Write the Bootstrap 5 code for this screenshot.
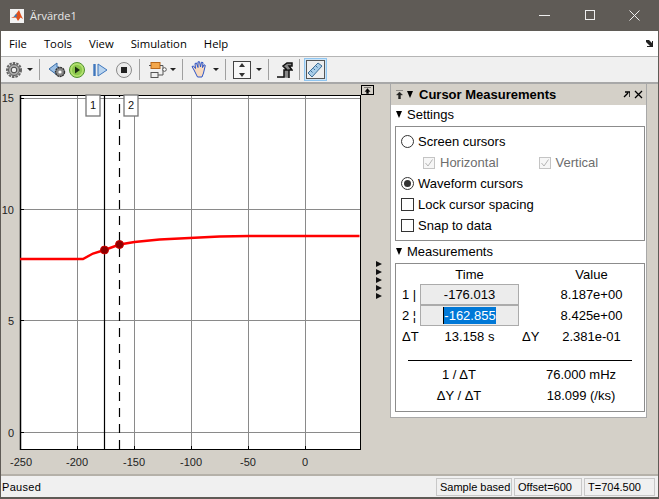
<!DOCTYPE html>
<html lang="sv">
<head>
<meta charset="UTF-8">
<title>Ärvärde1</title>
<link rel="stylesheet" href="https://cdn.jsdelivr.net/npm/bootstrap@5.3.2/dist/css/bootstrap.min.css">
<style>
html, body { width: 659px; height: 499px; overflow: hidden; background: #d4d0c8; }
body { font-family: "Liberation Sans", Arial, sans-serif; font-size: 13px; color: #000; line-height: 1; }
.win { width: 659px; height: 499px; border: 1px solid #5f5b56; border-top: 0; border-bottom-width: 2px; }
.titlebar { height: 31px; background: #5f5b56; font-family: "Open Sans", sans-serif; font-size: 11px; flex: none; }
.titlebar svg { display: block; }
.title-txt { margin-left: 5px; color: #e8e8e8; }
.winbtns { width: 101px; margin-right: 18px; }
.menubar { height: 26px; flex: none; background: #fff; border-bottom: 1px solid #b5b5b5; font-family: "Open Sans", sans-serif; font-size: 11.3px; padding: 0 5px 0 8px; gap: 17px; }
.toolbar { height: 27px; flex: none; background: #f0f0f0; border-bottom: 2px solid #a8a8a8; padding-left: 4px; }
.toolbar svg { display: block; flex: none; }
.tsep { width: 1px; height: 21px; background: #a0a0a0; margin-left: 6px; flex: none; }
.caret-ico { width: 6px; height: 0; border: 3px solid transparent; border-top: 3px solid #222; border-bottom: 0; flex: none; }
.tact { background: #cce4f7; border: 1px solid #8fc5f0; width: 23px; height: 23px; flex: none; margin-left: 4px; }
.g1 { margin-left: 1px; } .g2 { margin-left: 2px; } .g4 { margin-left: 4px; } .g5 { margin-left: 5px; }
.g6 { margin-left: 6px; } .g7 { margin-left: 7px; } .g8 { margin-left: 8px; }
.mainarea { height: 390px; flex: none; background: #d4d0c8; }
.plotwrap { width: 374px; flex: none; }
.plotwrap svg { display: block; }
.sidegap { width: 15px; flex: none; padding-top: 177px; }
.sidegap svg { display: block; }
.meas { width: 257px; height: 334px; flex: none; background: #fff; border-right: 1px solid #a8a8a8; border-bottom: 1px solid #a8a8a8; border-left: 1px solid #a8a8a8; }
.meas-head { height: 21px; background: #d4d0c8; padding: 0 3px 0 5px; font-weight: 700; font-size: 13px; }
.tri { display: inline-block; width: 0; height: 0; border: 3.5px solid transparent; border-top: 7px solid #000; border-bottom: 0; flex: none; }
.sect-head { height: 21px; padding-left: 5px; padding-bottom: 2px; gap: 5px; }
.sect-head.second { height: 22px; }
.sect-box { margin: 0 1px 0 4px; border: 1px solid #8c8c8c; }
.setbox { height: 115px; padding: 4px 0 0 5px; }
.optrow { height: 21px; gap: 4px; }
.optrow.subopt { padding-left: 22px; color: #6d6d6d; gap: 5px; }
.radio-ico { width: 13px; height: 13px; border: 1px solid #333; border-radius: 50%; background: #fff; flex: none; position: relative; }
.radio-ico.on::after { content: ""; position: absolute; left: 2px; top: 2px; width: 7px; height: 7px; border-radius: 50%; background: #333; }
.check-ico { width: 13px; height: 13px; border: 1px solid #333; background: #fff; flex: none; }
.check-ico svg { display: block; }
.check-ico.off { width: 12px; height: 12px; border-color: #c4c4c4; background: #f6f6f6; }
.subgap { margin-right: 35px; }
.measbox { height: 149px; }
.mrow { height: 21px; }
.mrow.shortrow { height: 20px; }
.c1 { width: 24px; padding-left: 6px; flex: none; }
.c2 { width: 99px; flex: none; text-align: center; }
.c3 { width: 34px; flex: none; padding-left: 3px; }
.c4 { flex: 1; text-align: center; padding-right: 14px; }
.timecell { height: 21px; background: #ececec; border: 1px solid #ababab; line-height: 19px; }
.sel-num { background: #0078d7; color: #fff; display: inline-block; line-height: 17px; border-left: 1px solid #000; }
.mrule { height: 1px; background: #000; margin: 13px 12px 3px 12px; }
.c5 { width: 126px; flex: none; text-align: center; }
.c6 { flex: 1; text-align: center; padding-right: 4px; }
.statusbar { height: 23px; flex: none; background: #f0f0f0; border-top: 2px solid #b5b1a9; font-size: 11px; padding: 2px 3px 0 1px; }
.sbox { height: 18px; background: #f0f0f0; border: 1px solid #c8c8c8; padding-left: 3px; line-height: 16px; margin-left: 2px; white-space: nowrap; }
.sb-a { width: 76px; } .sb-b { width: 68px; } .sb-c { width: 71px; }
.status-msg { line-height: 18px; letter-spacing: .3px; }
</style>
</head>
<body>
<div class="win d-flex flex-column">
  <!-- title bar -->
  <div class="titlebar d-flex align-items-center">
    <svg class="g8" width="16" height="16" viewBox="0 0 16 16"><rect x="1" y="1" width="14" height="14" fill="#f2f2f2"/><path d="M2 10l3-1.500L7 6l3-4 2 5 2 4-2.500-1.500L9 13 7 9.500z" fill="#e0521f"/><path d="M2 10l3-1.500L7 6l1 1-1 2.500L5 8.500z" fill="#2f7fbf"/></svg>
    <span class="title-txt flex-grow-1">Ärvärde1</span>
    <div class="winbtns d-flex justify-content-between align-items-center">
      <svg width="11" height="11" viewBox="0 0 11 11"><path d="M0 5.500h11" stroke="#eee"/></svg>
      <svg width="10" height="11" viewBox="0 0 10 11"><rect x=".5" y=".5" width="9" height="9" fill="none" stroke="#eee"/></svg>
      <svg width="11" height="11" viewBox="0 0 11 11"><path d="M.5.500l10 10M10.500.500l-10 10" stroke="#eee"/></svg>
    </div>
  </div>
  <!-- menu -->
  <div class="menubar d-flex align-items-center">
    <span>File</span><span>Tools</span><span>View</span><span>Simulation</span><span>Help</span>
    <svg class="ms-auto" width="7" height="7" viewBox="0 0 7 7"><path d="M0 0h3l3 3V1h1v6H1V6h3L0 2z" fill="#222"/></svg>
  </div>
  <!-- toolbar -->
  <div class="toolbar d-flex align-items-center">
    <svg width="18" height="18" viewBox="0 0 18 18"><circle cx="9" cy="9" r="7" fill="none" stroke="#666" stroke-width="2" stroke-dasharray="2.500 1"/><circle cx="9" cy="9" r="5.500" fill="#aaa" stroke="#555"/><circle cx="9" cy="9" r="2.800" fill="#eee" stroke="#444"/></svg>
    <span class="caret-ico g4"></span><span class="tsep"></span>
    <svg class="g8" width="19" height="18" viewBox="0 0 19 18"><path d="M1 8l8-6v4h2v7H9v1z" fill="#9cc0e6" stroke="#3a6ea8"/><circle cx="12" cy="11" r="4.500" fill="#888" stroke="#333" stroke-width="1.400" stroke-dasharray="2 .6"/><circle cx="12" cy="11" r="1.600" fill="#fff"/></svg>
    <svg class="g1" width="18" height="18" viewBox="0 0 18 18"><circle cx="9" cy="9" r="7.500" fill="#b2e06e" stroke="#4f9030"/><circle cx="9" cy="9" r="5.200" fill="#8cc84c"/><path d="M7 5.500l5 3.500-5 3.500z" fill="#1b2d12"/></svg>
    <svg class="g7" width="16" height="16" viewBox="0 0 16 16"><path d="M1.500 2v12" stroke="#3f77bd" stroke-width="2.400"/><path d="M5 2l9 6-9 6z" fill="#b9d4ef" stroke="#3f77bd"/></svg>
    <svg class="g6" width="18" height="18" viewBox="0 0 18 18"><circle cx="9" cy="9" r="7.500" fill="#ececec" stroke="#8a8a8a"/><rect x="6" y="6" width="6" height="6" fill="#222"/></svg>
    <span class="tsep"></span>
    <svg class="g8" width="20" height="18" viewBox="0 0 20 18"><rect x="3" y="1.500" width="9" height="6" fill="#f3a64a" stroke="#b8671a"/><rect x="3" y="11.500" width="7" height="5" fill="#eee" stroke="#555"/><path d="M1 4.500h2M12 4.500h3V14h-5M15 9h0" stroke="#555" fill="none"/><circle cx="16.500" cy="8.500" r="1.800" fill="#fff" stroke="#555"/></svg>
    <span class="caret-ico g2"></span><span class="tsep"></span>
    <svg class="g7" width="19" height="19" viewBox="0 0 19 19"><path d="M4 10L2 6.500 3.500 6l2 2.500L5 3.500 6.500 3l1.500 4.500V1.800h1.600L10.500 7l1-4.800 1.500.4-.5 5 1.500-2.800 1.300.6L13.500 13l-1.500 4H7.500z" fill="#f7d9bd" stroke="#2d55c8"/></svg>
    <span class="caret-ico g4"></span><span class="tsep"></span>
    <svg class="g7" width="18" height="18" viewBox="0 0 18 18"><rect x=".5" y=".5" width="17" height="17" fill="#f8f8f8" stroke="#444"/><path d="M9 2l3 4H6zM9 16l-3-4h6z" fill="#333"/></svg>
    <span class="caret-ico g5"></span><span class="tsep"></span>
    <svg class="g6" width="18" height="18" viewBox="0 0 18 18"><path d="M2 16h7V9h3L8 5l4-3h5v3h-3l3 4h-3v8" fill="#888" stroke="#111" stroke-width="1.500"/></svg>
    <span class="tsep"></span>
    <div class="tact d-flex align-items-center justify-content-center">
      <svg width="19" height="19" viewBox="0 0 19 19"><rect x=".5" y=".5" width="18" height="18" fill="#eee" stroke="#555"/><path d="M2 13L12 3l4 3L6 17z" fill="#a9cde8" stroke="#3d6f98"/><path d="M5 11l1.500 1.500M7.500 8.500L9 10M10 6l1.500 1.500" stroke="#3d6f98"/></svg>
    </div>
  </div>
  <!-- main -->
  <div class="mainarea d-flex">
    <div class="plotwrap">
      <svg width="374" height="390" viewBox="1 84 374 390" font-family="Liberation Sans, sans-serif" font-size="11">
        <rect x="20" y="95" width="340" height="354" fill="#fff"/>
        <path d="M77.500 96v353M134.500 96v353M191.500 96v353M248.500 96v353M305.500 96v353" stroke="#8a8a8a"/>
        <path d="M20 98.500h340M20 209.500h340M20 320.500h340M20 432.500h340" stroke="#8a8a8a"/>
        <path d="M77.500 446v3M134.500 446v3M191.500 446v3M248.500 446v3M305.500 446v3M20 98.500h4M20 209.500h4M20 320.500h4M20 432.500h4" stroke="#000"/>
        <path d="M20 95.500h341M20 449.500h341M360.500 95v355" stroke="#000" fill="none"/>
        <path d="M20.500 95v355" stroke="#000" stroke-width="1.500"/>
        <path d="M104.500 96v353" stroke="#000" stroke-width="1.200"/>
        <path d="M119.500 96v353" stroke="#000" stroke-width="1.200" stroke-dasharray="9 7" stroke-dashoffset="8"/>
        <path d="M20 259h63l10-5.500 11.500-3.500 15-5.500 15-2.500 25-2.500 30-1.500 30-1.500 30-.5h110" stroke="#f00" stroke-width="2.400" fill="none"/>
        <circle cx="104.500" cy="250" r="4" fill="#8c0000" stroke="#d00000"/>
        <circle cx="119.500" cy="244.500" r="4" fill="#8c0000" stroke="#d00000"/>
        <rect x="86" y="95" width="14" height="21" fill="#fff" stroke="#777" stroke-width="1.300"/>
        <text x="93" y="109" text-anchor="middle" fill="#111">1</text>
        <rect x="124" y="95" width="14" height="21" fill="#fff" stroke="#777" stroke-width="1.300"/>
        <text x="131" y="109" text-anchor="middle" fill="#111">2</text>
        <g fill="#222" text-anchor="end"><text x="14" y="102">15</text><text x="14" y="214">10</text><text x="14" y="325">5</text><text x="14" y="437">0</text></g>
        <g fill="#222" text-anchor="middle"><text x="21" y="466">-250</text><text x="77" y="466">-200</text><text x="134" y="466">-150</text><text x="191" y="466">-100</text><text x="248" y="466">-50</text><text x="305" y="466">0</text></g>
        <rect x="361.500" y="85.500" width="12" height="9" fill="#d4d0c8" stroke="#000"/>
        <path d="M364 87.500h7M367.500 88.500l2.500 3h-1.500v2h-2v-2H365z" fill="#000" stroke="#000" stroke-width=".4"/>
      </svg>
    </div>
    <div class="sidegap">
      <svg width="15" height="40" viewBox="0 0 15 40"><path d="M1 0l6 3-6 3zM1 8l6 3-6 3zM1 16l6 3-6 3zM1 24l6 3-6 3zM1 32l6 3-6 3z" fill="#111"/></svg>
    </div>
    <div class="meas">
      <div class="meas-head d-flex align-items-center">
        <svg width="7" height="9" viewBox="0 0 7 9"><path d="M0 .5h7M3.500 2l3 3h-2v4h-2V5h-2z" fill="#222" stroke="#222" stroke-width=".4"/></svg>
        <span class="tri g4"></span>
        <span class="flex-grow-1 g6">Cursor Measurements</span>
        <svg width="7" height="7" viewBox="0 0 7 7"><path d="M1 6l4-4M2 1h5v5" stroke="#000" fill="none" stroke-width="1.400"/></svg>
        <svg class="g4" width="9" height="9" viewBox="0 0 9 9"><path d="M1 1l7 7M8 1L1 8" stroke="#000" stroke-width="1.300"/></svg>
      </div>
      <div class="sect-head d-flex align-items-center"><span class="tri"></span><span>Settings</span></div>
      <div class="sect-box setbox">
        <div class="optrow d-flex align-items-center"><span class="radio-ico"></span><span>Screen cursors</span></div>
        <div class="optrow subopt d-flex align-items-center">
          <span class="check-ico off"><svg width="10" height="10" viewBox="0 0 10 10"><path d="M1.500 5l2.500 3L8.500 1.500" stroke="#b5b5b5" fill="none"/></svg></span><span class="subgap">Horizontal</span>
          <span class="check-ico off"><svg width="10" height="10" viewBox="0 0 10 10"><path d="M1.500 5l2.500 3L8.500 1.500" stroke="#b5b5b5" fill="none"/></svg></span><span>Vertical</span>
        </div>
        <div class="optrow d-flex align-items-center"><span class="radio-ico on"></span><span>Waveform cursors</span></div>
        <div class="optrow d-flex align-items-center"><span class="check-ico"></span><span>Lock cursor spacing</span></div>
        <div class="optrow d-flex align-items-center"><span class="check-ico"></span><span>Snap to data</span></div>
      </div>
      <div class="sect-head second d-flex align-items-center"><span class="tri"></span><span>Measurements</span></div>
      <div class="sect-box measbox">
        <div class="mrow shortrow d-flex align-items-center"><span class="c1"></span><span class="c2">Time</span><span class="c3"></span><span class="c4">Value</span></div>
        <div class="mrow d-flex align-items-center"><span class="c1">1 |</span><span class="c2 timecell">-176.013</span><span class="c3"></span><span class="c4">8.187e+00</span></div>
        <div class="mrow d-flex align-items-center"><span class="c1">2 ¦</span><span class="c2 timecell"><span class="sel-num">-162.855</span></span><span class="c3"></span><span class="c4">8.425e+00</span></div>
        <div class="mrow d-flex align-items-center"><span class="c1">ΔT</span><span class="c2">13.158 s</span><span class="c3">ΔY</span><span class="c4">2.381e-01</span></div>
        <div class="mrule"></div>
        <div class="mrow d-flex align-items-center"><span class="c5">1 / ΔT</span><span class="c6">76.000 mHz</span></div>
        <div class="mrow d-flex align-items-center"><span class="c5">ΔY / ΔT</span><span class="c6">18.099 (/ks)</span></div>
      </div>
    </div>
  </div>
  <!-- status -->
  <div class="statusbar d-flex align-items-start">
    <span class="flex-grow-1 status-msg">Paused</span>
    <span class="sbox sb-a">Sample based</span>
    <span class="sbox sb-b">Offset=600</span>
    <span class="sbox sb-c">T=704.500</span>
  </div>
</div>
<script src="https://cdn.jsdelivr.net/npm/bootstrap@5.3.2/dist/js/bootstrap.bundle.min.js"></script>
</body>
</html>
